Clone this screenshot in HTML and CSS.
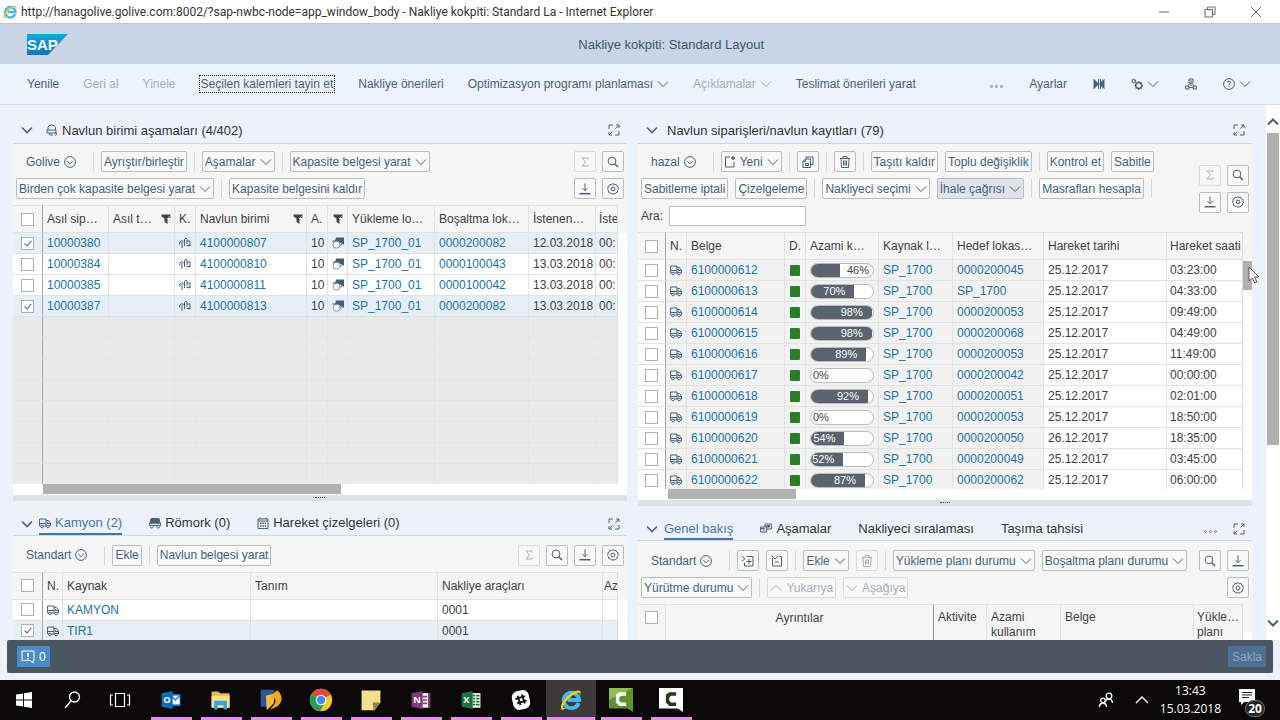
FILE: index.html
```
<!DOCTYPE html>

<html lang="tr">
  <head>
    <meta charset="utf-8" />
    <title>Nakliye kokpiti: Standard Layout</title>
    <link rel="stylesheet" href="styles.css">
  </head>

  <body>
    <svg class="sprite" width="0" height="0">
      <symbol id="i_down" viewBox="0 0 12 12"><path d="M1 3.500l5 5 5-5"/></symbol>
      <symbol id="i_up" viewBox="0 0 12 12"><path d="M1 8.500l5-5 5 5"/></symbol>
      <symbol id="i_circle_down" viewBox="0 0 12 12"><circle cx="6" cy="6" r="5.400"/><path d="M3.200 5l2.800 2.800L8.800 5"/></symbol>
      <symbol id="i_expand" viewBox="0 0 12 12"><path d="M1 5V1h4M11 7v4H7M7.500 4.500L11 1M8 1h3v3M4.500 7.500L1 11M1 8v3h3"/></symbol>
      <symbol id="i_sigma" viewBox="0 0 12 12"><path d="M9 3.500V2H3l3.500 4L3 10h6V8.500"/></symbol>
      <symbol id="i_search" viewBox="0 0 12 12"><circle cx="5" cy="5" r="3.900"/><path d="M7.700 7.700L11 11" stroke-width="1.600"/></symbol>
      <symbol id="i_download" viewBox="0 0 12 12"><path d="M6 0.500v7M3.500 5.200L6 7.700l2.500-2.500"/><path d="M0.500 10.700h11" stroke-width="1.500"/></symbol>
      <symbol id="i_gear" viewBox="0 0 12 12"><path d="M6 .6l1.300 1 1.700-.2.600 1.500 1.500.800-.200 1.500.700 1.300-1.100 1.200-.1 1.600-1.600.5-1 1.200L6 10.800l-1.800.200-1-1.200-1.600-.5-.1-1.600L.4 6.500l.7-1.300-.2-1.500 1.500-.8.6-1.500 1.700.2z"/><circle cx="6" cy="6" r="1.900"/></symbol>
      <symbol id="i_copy" viewBox="0 0 12 12"><path d="M4 3V1h7v7.500H8.500M3.500 3h5v8.500H1V5.500z M3.500 3v2.500H1M3.500 7.500h3v2h-3z"/></symbol>
      <symbol id="i_trash" viewBox="0 0 12 12"><path d="M1 2.500h10M4 2.500v-2h4v2M2 2.500l.5 9h7l.5-9M4.500 4.500v5M6 4.500v5M7.500 4.500v5"/></symbol>
      <symbol id="i_new" viewBox="0 0 12 12"><path d="M6 1H1.500v10H10V6M1.500 1v2"/><path d="M9 0v4M7 2h4" stroke-width="1.300"/></symbol>
      <symbol id="i_truck" viewBox="0 0 12 12"><path d="M.6 2h6.400v7H.6zM7 3.500h2.500l2 2.700V9H7M8.300 4.800v1.700h3M.6 6.500H7"/><circle cx="3" cy="9.500" r="1.300" fill="#fff"/><circle cx="9" cy="9.500" r="1.300" fill="#fff"/></symbol>
      <symbol id="i_trailer" viewBox="0 0 12 12"><path d="M2 1.500h8l1 4.500H1z" fill="currentColor"/><path d="M.5 6h11v2.500H.5z"/><circle cx="2.800" cy="9.500" r="1.500" fill="#fff"/><circle cx="9.200" cy="9.500" r="1.500" fill="#fff"/></symbol>
      <symbol id="i_calendar" viewBox="0 0 12 12"><path d="M1 2h10v9.500H1zM1 4h10M3 .5V2M9 .5V2"/><path d="M3 6.300h6M3 9h6" stroke-dasharray="1.500 .8" stroke-width="1.500"/></symbol>
      <symbol id="i_stages" viewBox="0 0 12 12"><path d="M.6 5h6v5h-6zM.6 6.600h4M5 2h6.400v5H7M5 2v3M5 4h5M2.500 8h2" /><path d="M7.500 3.500h2V5h-2z" fill="currentColor"/></symbol>
      <symbol id="i_unit" viewBox="0 0 12 12"><path d="M2 6V3.500Q2 1 5.500 1T9.500 3.500V6M1 6h9v3H1zM3 9l1 2h3M9 8.500l2 1.500-2 1.500"/></symbol>
      <symbol id="i_filter" viewBox="0 0 12 12"><path d="M1.500 1.500h9v3.500H8l-.5 1V11L4.500 9V5.500L1.500 3.500z" fill="currentColor" stroke="none"/><path d="M7 6l3.500-3.500" stroke="#c4c4c4"/></symbol>
      <symbol id="i_step" viewBox="0 0 12 12"><path d="M.8 7.500V5l2-1.500 2 1.500M3 5v6M5.500 9V2.500L7 1l1 1.500V7M8 4h3v4.500H7.500M9 8.500h2.500M10 7.500v2"/></symbol>
      <symbol id="i_loc" viewBox="0 0 12 12"><path d="M4 .5h8V8L9 6 3 4.500z" fill="#3d5f80" stroke="none"/><circle cx="4.500" cy="7.700" r="3.500" fill="#f5f8fb" stroke="#8b99a8"/><path d="M.5 4h4M8 8.300l2-1.500"/></symbol>
      <symbol id="i_insert" viewBox="0 0 12 12"><path d="M4.500 1.500H11V11H2.500V7.500M0 1l3 2.700L0 6M4.500 6.500h5M7 4v5"/></symbol>
      <symbol id="i_collapse" viewBox="0 0 12 12"><path d="M1.500 3V11h9V1.500H8.500M.5 .5L4 4 7.500 .5M4 7h4"/></symbol>
      <symbol id="i_join" viewBox="0 0 12 12"><path d="M1 1.500L5.500 6 1 10.500zM11 1.500L6.500 6 11 10.500z" fill="currentColor"/><path d="M5.500 1v10M7.500 1v10"/></symbol>
      <symbol id="i_gears" viewBox="0 0 12 12"><circle cx="2.800" cy="3" r="1.700" stroke-dasharray="1.200 .5" stroke-width="1.500"/><circle cx="7.700" cy="7.500" r="3" stroke-width="1.500"/><path d="M7.700 3v1.500M7.700 10.500V12M3.500 7.500h1M11 7.500h1M4.800 4.600l1 1M10 4.600l-.7 1M5 10.500l1-1M10.500 10.500l-1-1"/></symbol>
      <symbol id="i_org" viewBox="0 0 12 12"><path d="M4 1h4v4H4zM5 3h2M6 5v3M2.500 8L5 5.500M9.500 8L7 5.500M.7 8h3.300v3H.7zM8 8h3.300v3H8zM4 9.500h4"/></symbol>
      <symbol id="i_help" viewBox="0 0 12 12"><circle cx="6" cy="6" r="5.400"/><path d="M4.400 4.700Q4.400 3.200 6 3.200t1.600 1.400Q7.600 5.500 6 6.300v1M6 8.300v1"/></symbol>
    </svg>

    <header class="titlebar">
      <svg class="ie" viewBox="0 0 28 28"><use href="#ie_logo"/></svg>
      <span class="caption">http://hanagolive.golive.com:8002/?sap-nwbc-node=app_window_body - Nakliye kokpiti: Standard La - Internet Explorer</span>
      <div class="win_btns">
        <button aria-label="Simge durumuna küçült"><svg viewBox="0 0 12 12"><path d="M1 6h10"/></svg></button>
        <button aria-label="Önceki boyut"><svg viewBox="0 0 12 12"><path d="M1 3.500h7.500V11H1zM3.500 3.500V1H11v7.500H8.500"/></svg></button>
        <button aria-label="Kapat"><svg viewBox="0 0 12 12"><path d="M1 1l10 10M11 1L1 11"/></svg></button>
      </div>
    </header>

    <div class="shell">
      <svg class="sap" viewBox="0 0 41 21">
        <defs><linearGradient id="sap_blue" x1="0" y1="0" x2="0" y2="1"><stop offset="0" stop-color="#11a6e4"/><stop offset="1" stop-color="#1273bb"/></linearGradient></defs>
        <path d="M0 0h41L21 21H0z" fill="url(#sap_blue)"/>
        <text x="0" y="16">SAP</text>
      </svg>
      <h1>Nakliye kokpiti: Standard Layout</h1>
    </div>

    <nav class="menu">
      <button>Yenile</button>
      <button disabled>Geri al</button>
      <button disabled>Yinele</button>
      <button class="focused">Seçilen kalemleri tayin et</button>
      <button>Nakliye önerileri</button>
      <button>Optimizasyon programı planlaması <svg class="ic"><use href="#i_down"/></svg></button>
      <button disabled>Açıklamalar <svg class="ic"><use href="#i_down"/></svg></button>
      <button>Teslimat önerileri yarat</button>
      <div class="menu_end">
        <button class="dots" aria-label="Diğer"><i></i><i></i><i></i></button>
        <button>Ayarlar</button>
        <button aria-label="Birleştir"><svg class="ic"><use href="#i_join"/></svg></button>
        <button aria-label="Araçlar"><svg class="ic"><use href="#i_gears"/></svg><svg class="ic"><use href="#i_down"/></svg></button>
        <button aria-label="Hiyerarşi"><svg class="ic"><use href="#i_org"/></svg></button>
        <button aria-label="Yardım"><svg class="ic"><use href="#i_help"/></svg><svg class="ic"><use href="#i_down"/></svg></button>
      </div>
    </nav>

    <main>
      <div class="column left">
        <section class="panel top">
          <div class="panel_head">
            <svg class="ic fold"><use href="#i_down"/></svg>
            <svg class="ic"><use href="#i_unit"/></svg>
            <h2>Navlun birimi aşamaları (4/402)</h2>
            <button class="plain end" aria-label="Büyüt"><svg class="ic"><use href="#i_expand"/></svg></button>
          </div>
          <div class="toolbar">
            <div class="rows">
              <div class="row">
                <button class="view">Golive <svg class="ic"><use href="#i_circle_down"/></svg></button><hr>
                <button class="btn">Ayrıştır/birleştir</button><hr>
                <button class="btn">Aşamalar <svg class="ic"><use href="#i_down"/></svg></button><hr>
                <button class="btn">Kapasite belgesi yarat <svg class="ic"><use href="#i_down"/></svg></button>
              </div>
              <div class="row">
                <button class="btn">Birden çok kapasite belgesi yarat <svg class="ic"><use href="#i_down"/></svg></button><hr>
                <button class="btn">Kapasite belgesini kaldır</button>
              </div>
            </div>
            <div class="tools">
              <button class="btn sq" disabled aria-label="Toplam"><svg class="ic"><use href="#i_sigma"/></svg></button>
              <button class="btn sq" aria-label="Ara"><svg class="ic"><use href="#i_search"/></svg></button>
              <button class="btn sq" aria-label="İndir"><svg class="ic"><use href="#i_download"/></svg></button>
              <button class="btn sq" aria-label="Ayarlar"><svg class="ic"><use href="#i_gear"/></svg></button>
            </div>
          </div>
          <div class="grid">
            <div class="clip">
              <table class="units">
                <colgroup><col class="w30"><col class="w66"><col class="w66"><col class="w21"><col class="w111"><col class="w21"><col class="w20"><col class="w87"><col class="w94"><col class="w67"><col></colgroup>
                <thead>
                  <tr>
                    <th class="sel"><input type="checkbox" aria-label="Tümünü seç"></th>
                    <th>Asıl sip…</th>
                    <th><span class="filt">Asıl t…<svg class="ic"><use href="#i_filter"/></svg></span></th>
                    <th>K.</th>
                    <th><span class="filt">Navlun birimi<svg class="ic"><use href="#i_filter"/></svg></span></th>
                    <th>A.</th>
                    <th class="mid"><svg class="ic"><use href="#i_filter"/></svg></th>
                    <th>Yükleme lo…</th>
                    <th>Boşaltma lok…</th>
                    <th>İstenen…</th>
                    <th>İste</th>
                  </tr>
                </thead>
                <tbody id="units"></tbody>
              </table>
            </div>
            <div class="gutter"></div>
          </div>
          <div class="hscroll"><div class="thumb"></div></div>
          <div class="splitter"></div>
        </section>

        <section class="panel">
          <div class="panel_head low">
            <svg class="ic fold"><use href="#i_down"/></svg>
            <button class="tab active"><svg class="ic"><use href="#i_truck"/></svg> Kamyon (2)</button>
            <button class="tab"><svg class="ic"><use href="#i_trailer"/></svg> Römork (0)</button>
            <button class="tab"><svg class="ic"><use href="#i_calendar"/></svg> Hareket çizelgeleri (0)</button>
            <button class="plain end" aria-label="Büyüt"><svg class="ic"><use href="#i_expand"/></svg></button>
          </div>
          <div class="toolbar">
            <div class="rows">
              <div class="row">
                <button class="view">Standart <svg class="ic"><use href="#i_circle_down"/></svg></button><hr>
                <button class="btn">Ekle</button><hr>
                <button class="btn">Navlun belgesi yarat</button>
              </div>
            </div>
            <div class="tools four">
              <button class="btn sq" disabled aria-label="Toplam"><svg class="ic"><use href="#i_sigma"/></svg></button>
              <button class="btn sq" aria-label="Ara"><svg class="ic"><use href="#i_search"/></svg></button>
              <button class="btn sq" aria-label="İndir"><svg class="ic"><use href="#i_download"/></svg></button>
              <button class="btn sq" aria-label="Ayarlar"><svg class="ic"><use href="#i_gear"/></svg></button>
            </div>
          </div>
          <div class="grid">
            <div class="clip">
              <table class="trucks">
                <colgroup><col class="w30"><col class="w20"><col class="w188"><col class="w187"><col class="w165"><col></colgroup>
                <thead>
                  <tr>
                    <th class="sel"><input type="checkbox" aria-label="Tümünü seç"></th>
                    <th>N.</th><th>Kaynak</th><th>Tanım</th><th>Nakliye araçları</th><th class="tight">Az</th>
                  </tr>
                </thead>
                <tbody>
                  <tr>
                    <td class="sel"><input type="checkbox" aria-label="KAMYON"></td>
                    <td class="mid"><svg class="ic"><use href="#i_truck"/></svg></td>
                    <td><a href="#">KAMYON</a></td><td></td><td>0001</td><td></td>
                  </tr>
                  <tr class="picked">
                    <td class="sel"><input type="checkbox" checked aria-label="TIR1"></td>
                    <td class="mid"><svg class="ic"><use href="#i_truck"/></svg></td>
                    <td><a href="#">TIR1</a></td><td></td><td>0001</td><td></td>
                  </tr>
                </tbody>
              </table>
            </div>
            <div class="gutter"></div>
          </div>
        </section>
      </div>

      <div class="column right">
        <section class="panel top">
          <div class="panel_head">
            <svg class="ic fold"><use href="#i_down"/></svg>
            <h2>Navlun siparişleri/navlun kayıtları (79)</h2>
            <button class="plain end" aria-label="Büyüt"><svg class="ic"><use href="#i_expand"/></svg></button>
          </div>
          <div class="toolbar">
            <div class="rows">
              <div class="row">
                <button class="view">hazal <svg class="ic"><use href="#i_circle_down"/></svg></button><hr>
                <button class="btn"><svg class="ic"><use href="#i_new"/></svg> Yeni <svg class="ic"><use href="#i_down"/></svg></button><hr>
                <button class="btn sq" aria-label="Kopyala"><svg class="ic"><use href="#i_copy"/></svg></button><hr>
                <button class="btn sq" aria-label="Sil"><svg class="ic"><use href="#i_trash"/></svg></button><hr>
                <button class="btn">Taşıtı kaldır</button>
                <button class="btn">Toplu değişiklik</button><hr>
                <button class="btn">Kontrol et</button>
                <button class="btn">Sabitle</button>
              </div>
              <div class="row">
                <button class="btn">Sabitleme iptali</button>
                <button class="btn">Çizelgeleme</button><hr>
                <button class="btn">Nakliyeci seçimi <svg class="ic"><use href="#i_down"/></svg></button>
                <button class="btn on">İhale çağrısı <svg class="ic"><use href="#i_down"/></svg></button><hr>
                <button class="btn">Masrafları hesapla</button><hr>
              </div>
              <div class="row">
                <label for="find">Ara:</label>
                <input type="text" id="find">
              </div>
            </div>
            <div class="tools">
              <button class="btn sq" disabled aria-label="Toplam"><svg class="ic"><use href="#i_sigma"/></svg></button>
              <button class="btn sq" aria-label="Ara"><svg class="ic"><use href="#i_search"/></svg></button>
              <button class="btn sq" aria-label="İndir"><svg class="ic"><use href="#i_download"/></svg></button>
              <button class="btn sq" aria-label="Ayarlar"><svg class="ic"><use href="#i_gear"/></svg></button>
            </div>
          </div>
          <div class="grid">
            <div class="clip">
              <table class="orders">
                <colgroup><col class="w28"><col class="w21"><col class="w98"><col class="w21"><col class="w73"><col class="w74"><col class="w91"><col class="w123"><col></colgroup>
                <thead>
                  <tr>
                    <th class="sel"><input type="checkbox" aria-label="Tümünü seç"></th>
                    <th>N.</th><th>Belge</th><th>D.</th><th>Azami k…</th><th>Kaynak l…</th><th>Hedef lokas…</th><th>Hareket tarihi</th><th>Hareket saati</th>
                  </tr>
                </thead>
                <tbody id="orders"></tbody>
              </table>
            </div>
            <div class="gutter"><div class="thumb"></div></div>
            <svg class="cursor" viewBox="0 0 13 18"><path d="M1 1v14l3.300-3 2.400 5 2.200-1-2.300-5H11z"/></svg>
          </div>
          <div class="hscroll"><div class="thumb"></div></div>
          <div class="splitter"></div>
        </section>

        <section class="panel">
          <div class="panel_head low">
            <svg class="ic fold"><use href="#i_down"/></svg>
            <button class="tab active">Genel bakış</button>
            <button class="tab"><svg class="ic"><use href="#i_stages"/></svg> Aşamalar</button>
            <button class="tab">Nakliyeci sıralaması</button>
            <button class="tab">Taşıma tahsisi</button>
            <button class="dots end" aria-label="Diğer"><i></i><i></i><i></i></button>
            <button class="plain" aria-label="Büyüt"><svg class="ic"><use href="#i_expand"/></svg></button>
          </div>
          <div class="toolbar">
            <div class="rows">
              <div class="row">
                <button class="view">Standart <svg class="ic"><use href="#i_circle_down"/></svg></button><hr>
                <button class="btn sq" aria-label="Aç"><svg class="ic"><use href="#i_insert"/></svg></button>
                <button class="btn sq" aria-label="Kapat"><svg class="ic"><use href="#i_collapse"/></svg></button><hr>
                <button class="btn">Ekle <svg class="ic"><use href="#i_down"/></svg></button>
                <button class="btn sq" disabled aria-label="Sil"><svg class="ic"><use href="#i_trash"/></svg></button><hr>
                <button class="btn">Yükleme planı durumu <svg class="ic"><use href="#i_down"/></svg></button>
                <button class="btn">Boşaltma planı durumu <svg class="ic"><use href="#i_down"/></svg></button>
              </div>
              <div class="row">
                <button class="btn">Yürütme durumu <svg class="ic"><use href="#i_down"/></svg></button><hr>
                <button class="btn" disabled><svg class="ic"><use href="#i_up"/></svg> Yukarıya</button>
                <button class="btn" disabled><svg class="ic"><use href="#i_down"/></svg> Aşağıya</button>
              </div>
            </div>
            <div class="tools">
              <button class="btn sq" aria-label="Ara"><svg class="ic"><use href="#i_search"/></svg></button>
              <button class="btn sq" aria-label="İndir"><svg class="ic"><use href="#i_download"/></svg></button>
              <button class="btn sq last" aria-label="Ayarlar"><svg class="ic"><use href="#i_gear"/></svg></button>
            </div>
          </div>
          <div class="grid">
            <div class="clip">
              <table class="details">
                <colgroup><col class="w28"><col class="w268"><col class="w53"><col class="w74"><col class="w133"><col></colgroup>
                <thead>
                  <tr>
                    <th class="sel"><input type="checkbox" aria-label="Tümünü seç"></th>
                    <th class="mid">Ayrıntılar</th><th>Aktivite</th><th>Azami kullanım</th><th>Belge</th><th>Yükle… planı</th>
                  </tr>
                </thead>
              </table>
            </div>
            <div class="gutter"></div>
          </div>
        </section>
      </div>

      <div class="vscroll">
        <svg class="ic"><use href="#i_up"/></svg>
        <div class="track"><div class="thumb"></div></div>
        <svg class="ic"><use href="#i_down"/></svg>
      </div>
    </main>

    <footer class="actions">
      <button class="msgs"><svg viewBox="0 0 14 14"><path d="M1 1h12v9.500h-1V13l-3-2.500H1z"/><path d="M7 3v4M7 8v1.500" stroke-width="1.600"/></svg> 0</button>
      <button class="save" disabled>Sakla</button>
    </footer>

    <div class="taskbar">
      <button class="sys" aria-label="Başlat"><svg viewBox="0 0 28 28"><path d="M6 8.500l7-1v6H6zM14 7.300l8-1.200v7.400h-8zM6 14.500h7v6l-7-1zM14 14.500h8v7.400l-8-1.200z" fill="#fff"/></svg></button>
      <button class="sys" aria-label="Ara"><svg viewBox="0 0 28 28"><g fill="none" stroke="#fff" stroke-width="1.300"><circle cx="16.500" cy="11" r="5"/><path d="M13 15l-6 7"/></g></svg></button>
      <button class="sys" aria-label="Görev görünümü"><svg viewBox="0 0 28 28"><path d="M9.500 7.500h9v13h-9zM7 9H4.500v10H7M21 9h2.500v10H21" fill="none" stroke="#fff" stroke-width="1.200"/></svg></button>
      <button class="app" aria-label="Outlook"><svg viewBox="0 0 28 28"><path d="M14 7h11v14H14z" fill="#1a78c8"/><path d="M14 9h10v10H14z" fill="#fff"/><path d="M15 10l4 4 5-5" fill="none" stroke="#1a78c8" stroke-width="1.500"/><path d="M3 6l13-2.500v21L3 22z" fill="#0a6ebd"/><text x="5" y="18">O</text></svg></button>
      <button class="app" aria-label="Dosya Gezgini"><svg viewBox="0 0 28 28"><path d="M3 4h8l2 2h11v17H3z" fill="#e9b84a"/><path d="M3 9h21v14H3z" fill="#fbe08a"/><path d="M6 25V15h15v10h-4v-5h-7v5z" fill="#35a4e0"/></svg></button>
      <button class="app" aria-label="SAP Logon"><svg viewBox="0 0 28 28"><path d="M2 2h16v4l-7 7-2 9H2z" fill="#2a579c"/><path d="M8 9l11-3-2 12-8 8z" fill="#f6bd36"/><path d="M22 3c8 8 5 19-9 22 5-6 8-9 5-14l-5 1 6-8z" fill="#f5a71c"/></svg></button>
      <button class="app" aria-label="Chrome"><svg viewBox="0 0 28 28"><circle cx="14" cy="14" r="13" fill="#f7cc2f"/><path d="M14 14L2.700 7.500a13 13 0 0 1 22.600 0z" fill="#dd4b3e"/><path d="M14 14L2.700 7.500A13 13 0 0 0 13 27l6-11z" fill="#1fa05a"/><circle cx="14" cy="14" r="6.200" fill="#fff"/><circle cx="14" cy="14" r="4.900" fill="#4587f0"/></svg></button>
      <button class="app" aria-label="Yapışkan Notlar"><svg viewBox="0 0 28 28"><path d="M3 3h22v14l-7 9H3z" fill="#f5e08f"/><path d="M16 17h9l-8 9z" fill="#8f7d38"/></svg></button>
      <button class="app" aria-label="OneNote"><svg viewBox="0 0 28 28"><path d="M14 6h10v17H14z" fill="#fff"/><path d="M22 6h3v17h-3zM16 9h5v2h-5zM16 13h5v2h-5zM16 17h5v2h-5z" fill="#80397b"/><path d="M3 6l13-2.500v21L3 22z" fill="#80397b"/><text x="5" y="18">N</text></svg></button>
      <button class="app" aria-label="Excel"><svg viewBox="0 0 28 28"><path d="M14 6h11v17H14z" fill="#fff"/><path d="M16 8h3v2h-3zM20 8h4v2h-4zM16 11.500h3v2h-3zM20 11.500h4v2h-4zM16 15h3v2h-3zM20 15h4v2h-4zM16 18.500h3v2h-3zM20 18.500h4v2h-4z" fill="#1e7145"/><path d="M3 6l13-2.500v21L3 22z" fill="#1e7145"/><text x="5" y="18">X</text></svg></button>
      <button class="app" aria-label="Slack"><svg viewBox="0 0 28 28"><rect x="4" y="3" width="20" height="22" rx="7" fill="#fff" transform="rotate(-12 14 14)"/><path d="M10 9l3.500 11M15 7.500L18.500 18M7.500 13l11-3.500M9.500 18l11-3.500" stroke="#111" stroke-width="2.200"/></svg></button>
      <button class="app current" aria-label="Internet Explorer"><svg viewBox="0 0 28 28">
        <g id="ie_logo"><path d="M23 17.500A9 9 0 1 1 23.500 14H10" fill="none" stroke="#45b9ec" stroke-width="4.500"/><path d="M3 25C-1 20 12 4 22 3c4 0 4 3 2 7 1-4 0-5-3-4C14 8 3 20 5 23c1 1 3 0 5-1-3 3-6 4-7 3z" fill="#f3c62f"/></g>
      </svg></button>
      <button class="app" aria-label="Camtasia"><svg viewBox="0 0 28 28"><path d="M0 0h28v28l-6-4H0z" fill="#5f9527"/><path d="M0 0h28L0 14z" fill="#90bc51"/><path d="M20 5h-8L8 8v9l4 4h8v-4h-6l-2-2v-4l2-2h6z" fill="#fff"/></svg></button>
      <button class="app" aria-label="Camtasia Kaydedici"><svg viewBox="0 0 28 28"><path d="M0 0h28v28l-6-4H0z" fill="#fff"/><path d="M20 5h-8L8 8v9l4 4h8v-4h-6l-2-2v-4l2-2h6z" fill="#26391a"/></svg></button>
      <div class="tray">
        <svg class="people" viewBox="0 0 20 20"><g fill="none" stroke="#fff" stroke-width="1.300"><circle cx="13" cy="6" r="2.800"/><path d="M9.500 12c0-4 7-4 7 1"/><circle cx="7" cy="10.500" r="2.300"/><path d="M3.500 17c0-5 7-5 7 0"/></g></svg>
        <svg viewBox="0 0 20 20"><path d="M4 13l6-6 6 6" fill="none" stroke="#fff" stroke-width="1.300"/></svg>
        <div class="clock">13:43<br>15.03.2018</div>
        <div class="notes">
          <svg viewBox="0 0 20 20"><path d="M2 1h16v13H7l-3 3v-3H2z" fill="#fff"/><path d="M5 4.500h10M5 7h10M5 9.500h7" stroke="#222"/></svg>
          <span class="badge">20</span>
        </div>
      </div>
    </div>

    <script>
      const units = [
        ["10000380", "4100000807", "0000200082", "12.03.2018", true],
        ["10000384", "4100000810", "0000100043", "13.03.2018", false],
        ["10000385", "4100000811", "0000100042", "13.03.2018", false],
        ["10000387", "4100000813", "0000200082", "13.03.2018", true]
      ];
      const orders = [
        ["6100000612", 46, "0000200045", "25.12.2017", "03:23:00"],
        ["6100000613", 70, "SP_1700", "25.12.2017", "04:33:00"],
        ["6100000614", 98, "0000200053", "25.12.2017", "09:49:00"],
        ["6100000615", 98, "0000200068", "25.12.2017", "04:49:00"],
        ["6100000616", 89, "0000200053", "25.12.2017", "11:49:00"],
        ["6100000617", 0, "0000200042", "25.12.2017", "00:00:00"],
        ["6100000618", 92, "0000200051", "25.12.2017", "02:01:00"],
        ["6100000619", 0, "0000200053", "25.12.2017", "18:50:00"],
        ["6100000620", 54, "0000200050", "26.12.2017", "18:35:00"],
        ["6100000621", 52, "0000200049", "25.12.2017", "03:45:00"],
        ["6100000622", 87, "0000200062", "25.12.2017", "06:00:00"]
      ];

      function Icon(name)
      {
        return `<svg class="ic"><use href="#i_${name}"/></svg>`;
      }

      function Link(text)
      {
        return `<td><a href="#">${text}</a></td>`;
      }

      function Unit_Row(u)
      {
        return `<tr class="${u[4] ? "picked" : ""}">
          <td class="sel"><input type="checkbox" aria-label="${u[1]}" ${u[4] ? "checked" : ""}></td>
          ${Link(u[0])}<td></td><td class="mid">${Icon("step")}</td>${Link(u[1])}<td>10</td>
          <td class="mid">${Icon("loc")}</td>${Link("SP_1700_01")}${Link(u[2])}<td>${u[3]}</td><td>00:</td></tr>`;
      }

      // the label sits inside the fill once the fill is wide enough for it
      function Bar(pct)
      {
        const fill = pct ? `<span class="fill" style="width:${pct}%">${pct > 50 ? pct + "%" : ""}</span>` : "";
        const rest = pct > 50 ? "" : `<span class="${pct ? "rest" : "none"}">${pct}%</span>`;
        return `<div class="bar">${fill}${rest}</div>`;
      }

      function Order_Row(o)
      {
        return `<tr><td class="sel"><input type="checkbox" aria-label="${o[0]}"></td>
          <td class="mid">${Icon("truck")}</td>${Link(o[0])}<td class="mid"><span class="status"></span></td>
          <td class="bar_cell">${Bar(o[1])}</td>${Link("SP_1700")}${Link(o[2])}<td>${o[3]}</td><td>${o[4]}</td></tr>`;
      }

      const blank = '<tr class="blank">' + "<td></td>".repeat(11) + "</tr>";
      document.getElementById("units").innerHTML = units.map(Unit_Row).join("") + blank.repeat(30);
      document.getElementById("orders").innerHTML = orders.map(Order_Row).join("");
    </script>
  </body>
</html>
```

FILE: styles.css
```
*
{
  box-sizing: border-box;
}
html, body
{
  margin: 0;
  padding: 0;
  height: 100%;
  overflow: hidden;
}
body
{
  display: flex;
  flex-direction: column;
  background-color: #edf2fa;
  color: #404040;
  font-family: "Liberation Sans", Arial, sans-serif;
  font-size: 12px;
}
button
{
  margin: 0;
  padding: 0;
  border: 0;
  background: none;
  color: #46617c;
  font: inherit;
  white-space: nowrap;
  cursor: pointer;
  display: flex;
  align-items: center;
  gap: 4px;
}
button:disabled
{
  color: #a3b0bd;
}
h1, h2
{
  margin: 0;
  font-size: 13px;
  font-weight: normal;
}
a
{
  color: #1873a8;
  text-decoration: none;
}
.sprite
{
  position: absolute;
}
.ic
{
  width: 12px;
  height: 12px;
  flex: none;
  color: #46617c;
  fill: none;
  stroke: currentColor;
  stroke-width: 1;
}
button .ic
{
  color: inherit;
}

/* window title ============================================================= */
.titlebar
{
  flex: none;
  display: flex;
  align-items: center;
  height: 24px;
  padding: 0 18px 0 2px;
  gap: 3px;
  background-color: #fff;
  border-bottom: 1px solid #c3c7cc;
  color: #333;
  font-family: Roboto, "Open Sans", sans-serif;
}
.ie
{
  width: 16px;
  height: 16px;
}
.caption
{
  white-space: nowrap;
}
.win_btns
{
  display: flex;
  gap: 34px;
  margin-left: auto;
}
.win_btns svg
{
  width: 12px;
  height: 12px;
  fill: none;
  stroke: #666;
}

/* header =================================================================== */
.shell
{
  flex: none;
  display: grid;
  grid-template-columns: 53fr auto 47fr;
  align-items: center;
  height: 40px;
  padding: 0 27px;
  background-color: #c9d5e5;
}
.shell h1
{
  color: #3a5673;
}
.sap
{
  width: 41px;
  height: 21px;
}
.sap text
{
  fill: #fff;
  font-size: 15px;
  font-weight: bold;
}
.menu
{
  flex: none;
  display: flex;
  align-items: center;
  gap: 24px;
  height: 41px;
  padding: 0 29px 0 27px;
  background-color: #edf3fa;
  border-bottom: 1px solid #d6dee9;
}
.menu .focused
{
  padding: 1px;
  outline: 1px dotted #222;
}
.menu_end
{
  display: flex;
  align-items: center;
  gap: 26px;
  margin-left: auto;
}
.dots
{
  gap: 2px;
  padding-top: 5px;
}
.dots i
{
  width: 3px;
  height: 3px;
  border: 1px solid #6c8094;
  border-radius: 2px;
}

/* panels =================================================================== */
main
{
  flex: 1;
  display: flex;
  min-height: 0;
  padding-left: 13px;
}
.column
{
  flex: 1;
  display: flex;
  flex-direction: column;
  min-width: 0;
}
.left
{
  margin-right: 11px;
}
.right
{
  margin-right: 14px;
}
.panel
{
  flex: 1;
  display: flex;
  flex-direction: column;
  min-height: 0;
}
.left .top
{
  flex: 0 0 74%;
}
.right .top
{
  flex: 0 0 75%;
}
.panel_head
{
  flex: none;
  display: flex;
  align-items: center;
  gap: 4px;
  height: 39px;
  padding: 12px 7px 0 8px;
  border-bottom: 1px solid #ccd6e4;
}
.panel_head h2
{
  color: #333;
}
.panel_head .fold
{
  margin-right: 9px;
  stroke-width: 1.600;
}
.right .fold
{
  margin-right: 5px;
}
.panel_head.low
{
  height: 35px;
  padding-top: 12px;
  align-items: stretch;
}
.low .fold
{
  align-self: center;
  margin-right: 2px;
}
.end
{
  margin-left: auto;
}
.low .dots.end
{
  margin-right: 12px;
}
.tab
{
  margin-right: 23px;
  border-bottom: 2px solid transparent;
  color: #333;
  font-size: 13px;
}
.tab .ic
{
  color: #46617c;
}
.tab.active
{
  border-color: #3f77ad;
  color: #3f77ad;
}

/* toolbars ================================================================= */
.toolbar
{
  flex: none;
  display: flex;
  align-items: center;
  justify-content: space-between;
  padding: 7px 3px 6px 3px;
  background-color: #f5f5f5;
}
.low + .toolbar
{
  padding-top: 9px;
}
.rows
{
  display: flex;
  flex-direction: column;
  gap: 6px;
}
.row
{
  display: flex;
  align-items: center;
  height: 21px;
}
.row .btn + .btn
{
  margin-left: 7px;
}
.row hr
{
  width: 1px;
  height: 19px;
  margin: 0 7px;
  border: 0;
  background-color: #d8d8d8;
}
.view
{
  padding: 0 10px;
}
.btn
{
  height: 21px;
  padding: 0 2px;
  border: 1px solid #bcbcbc;
  border-radius: 2px;
  background-color: #f8f8f8;
}
.btn:disabled
{
  border-color: #d9d9d9;
}
.btn.on
{
  background-color: #dfe3e9;
}
.sq
{
  width: 22px;
  justify-content: center;
}
.tools
{
  display: grid;
  grid-template-columns: 22px 22px;
  gap: 6px;
}
.tools.four
{
  grid-template-columns: repeat(4, 22px);
}
.tools .last
{
  grid-column: 2;
}
.row label
{
  width: 28px;
}
#find
{
  width: 137px;
  height: 20px;
  border: 1px solid #bcbcbc;
  background-color: #fff;
}

/* tables =================================================================== */
.grid
{
  flex: 1;
  display: flex;
  position: relative;
  min-height: 0;
  background-color: #f5f5f5;
}
.clip
{
  flex: 1;
  min-width: 0;
  overflow: hidden;
}
table
{
  width: 100%;
  table-layout: fixed;
  border-spacing: 0;
}
th, td
{
  height: 21px;
  padding: 0 2px 0 4px;
  border-right: 1px solid #e2e2e2;
  border-bottom: 1px solid #e2e2e2;
  background-color: #fff;
  text-align: left;
  font-weight: normal;
  white-space: nowrap;
  overflow: hidden;
}
th
{
  height: 28px;
  border-top: 1px solid #e2e2e2;
  background-color: #f5f5f5;
}
th:last-child, td:last-child
{
  padding-left: 3px;
  padding-right: 0;
  border-right: 0;
}
th.tight:last-child
{
  padding-left: 1px;
}
td .ic, th .ic
{
  display: block;
}
td.mid, th.mid
{
  padding: 0 4px;
  text-align: center;
}
td.sel, th.sel
{
  padding: 0;
  border-right-color: #a5a5a5;
  text-align: center;
}
.filt
{
  display: flex;
  align-items: center;
  justify-content: space-between;
}
th .ic
{
  color: #444;
}
.picked td
{
  background-color: #e6eef6;
}
.blank td
{
  background-color: #eaeaea;
  border-color: #e5e5e5;
}
.blank td:first-child
{
  border-right-color: #a5a5a5;
}
.orders td:nth-child(n+2):nth-child(-n+7)
{
  background-color: #f1f1f1;
}
.details th
{
  height: 48px;
  padding-top: 5px;
  line-height: 15px;
  vertical-align: top;
  white-space: normal;
}
.details th.sel, .details th.mid
{
  padding-top: 6px;
}
.details th.sel
{
  border-right-color: #e2e2e2;
}
.details th.mid
{
  border-right-color: #999;
}
input[type=checkbox]
{
  appearance: none;
  display: block;
  width: 13px;
  height: 13px;
  margin: 0 auto;
  border: 1px solid #b0b0b0;
  background-color: #fff;
}
input[type=checkbox]:checked::before
{
  content: "";
  display: block;
  width: 3px;
  height: 6px;
  margin: 1px 0 0 4px;
  border: solid #46617c;
  border-width: 0 1px 1px 0;
  transform: rotate(40deg);
}
.status
{
  display: block;
  width: 10px;
  height: 11px;
  margin: 0 auto;
  border-radius: 1px;
  background-color: #277f27;
}
td.bar_cell
{
  padding: 0 4px;
}
.bar
{
  display: flex;
  align-items: center;
  width: 64px;
  height: 15px;
  border: 1px solid #bbb;
  border-radius: 8px;
  background-color: #fff;
  font-size: 11px;
  overflow: hidden;
}
.fill
{
  height: 13px;
  padding-right: 9px;
  background-color: #5b646e;
  color: #fff;
  line-height: 13px;
  text-align: right;
}
.rest
{
  flex: 1;
  padding-right: 4px;
  text-align: right;
}
.none
{
  padding-left: 2px;
}
.w20 { width: 20px; }
.w21 { width: 21px; }
.w28 { width: 28px; }
.w30 { width: 30px; }
.w53 { width: 53px; }
.w66 { width: 66px; }
.w67 { width: 67px; }
.w73 { width: 73px; }
.w74 { width: 74px; }
.w87 { width: 87px; }
.w91 { width: 91px; }
.w94 { width: 94px; }
.w98 { width: 98px; }
.w111 { width: 111px; }
.w123 { width: 123px; }
.w133 { width: 133px; }
.w165 { width: 165px; }
.w187 { width: 187px; }
.w188 { width: 188px; }
.w268 { width: 268px; }

/* scrollbars =============================================================== */
.thumb
{
  background-color: #b0b0b0;
}
.gutter
{
  width: 10px;
  padding-top: 29px;
  border-left: 1px solid #ddd;
  background: linear-gradient(#f5f5f5 28px, #fff 28px);
}
.gutter .thumb
{
  height: 29px;
}
.hscroll
{
  flex: none;
  height: 11px;
  padding-left: 30px;
  background-color: #fff;
}
.hscroll .thumb
{
  width: 51%;
  height: 10px;
}
.right .hscroll .thumb
{
  width: 22%;
}
.splitter
{
  flex: none;
  height: 6px;
  background-color: #dfe1e3;
}
.splitter::before
{
  content: "";
  display: block;
  width: 10px;
  height: 2px;
  margin: 0 auto;
  border-bottom: 1px dotted #444;
}
.vscroll
{
  display: flex;
  flex-direction: column;
  align-items: center;
  width: 14px;
  padding: 11px 1px;
  background-color: #fff;
}
.vscroll .ic
{
  stroke-width: 2;
}
.track
{
  flex: 1;
  width: 12px;
  padding: 5px 0 12px 0;
}
.track .thumb
{
  height: 66%;
}
.cursor
{
  position: absolute;
  top: 34px;
  right: -9px;
  width: 13px;
  height: 18px;
  fill: #fff;
  stroke: #555;
}

/* footer =================================================================== */
.actions
{
  flex: none;
  display: flex;
  align-items: center;
  justify-content: space-between;
  height: 33px;
  margin: 0 7px 7px 7px;
  padding: 0 7px 0 10px;
  border-radius: 2px;
  background-color: #4b5661;
}
.msgs, .save
{
  height: 21px;
  padding: 0 4px;
  border-radius: 1px;
  background-color: #4a8cc7;
  color: #fff;
}
.msgs svg
{
  width: 14px;
  height: 14px;
  fill: none;
  stroke: #fff;
}
.save:disabled
{
  background-color: #4c7194;
  color: #8fa5ba;
}

/* taskbar ================================================================== */
.taskbar
{
  flex: none;
  display: flex;
  height: 40px;
  background-color: #0b0809;
  color: #fff;
  font-family: "Open Sans", "Noto Sans", sans-serif;
}
.sys, .app
{
  justify-content: center;
  width: 48px;
}
.app
{
  width: 50px;
  background: linear-gradient(#e38fe8, #e38fe8) center bottom / 41px 3px no-repeat;
}
.app.current
{
  background-color: #3d3a3b;
  background-size: 48px 3px;
}
.sys svg
{
  width: 28px;
  height: 28px;
}
.app svg
{
  width: 24px;
  height: 24px;
}
.app text
{
  fill: #fff;
  font-size: 11px;
  font-weight: bold;
}
.sys:nth-child(3)
{
  margin-right: 2px;
}
.tray
{
  display: flex;
  align-items: center;
  gap: 8px;
  margin-left: auto;
  padding-right: 15px;
}
.tray svg
{
  width: 20px;
  height: 20px;
}
.people
{
  margin-right: 8px;
}
.clock
{
  line-height: 18px;
  text-align: center;
}
.notes
{
  position: relative;
  padding-left: 8px;
  padding-right: 8px;
}
.badge
{
  position: absolute;
  right: 0;
  bottom: -5px;
  width: 20px;
  height: 17px;
  border: 1px solid #777;
  border-radius: 9px;
  background-color: #222;
  font-size: 12px;
  font-weight: bold;
  line-height: 15px;
  text-align: center;
}
```
